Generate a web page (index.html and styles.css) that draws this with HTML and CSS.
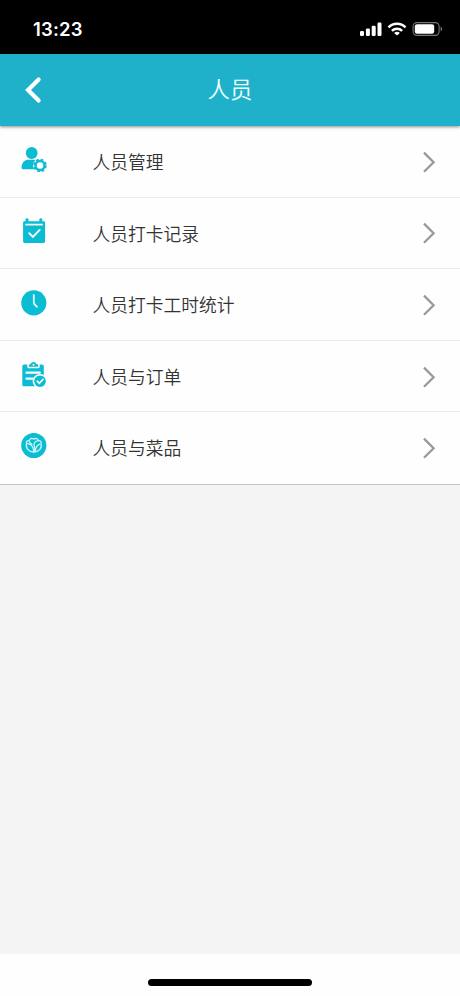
FILE: index.html
```html
<!DOCTYPE html>
<html lang="zh-CN">
<head>
<meta charset="utf-8">
<title>人员</title>
<link rel="stylesheet" href="styles.css">
</head>
<body>
<div class="screen">
  <div class="status">
    <span class="time">13:23</span>
    <div class="indicators">
      <svg class="signal" viewBox="0 0 22 14" fill="#fff"><rect x="0" y="9" width="4" height="5" rx="1.2"/><rect x="5.9" y="6.4" width="4" height="7.6" rx="1.2"/><rect x="11.7" y="3.8" width="4" height="10.2" rx="1.2"/><rect x="17.5" y="0.6" width="4" height="13.4" rx="1.2"/></svg>
      <svg class="wifi" viewBox="0 0 20 14" fill="none" stroke="#fff" stroke-width="2.5"><path d="M1.5 5.3C6.2.5 13.8.5 18.5 5.3M4.9 8.8c2.8-2.8 7.4-2.8 10.2 0"/><path d="M10 13.6 7.1 10.9c1.6-1.5 4.2-1.5 5.8 0z" fill="#fff" stroke="none"/></svg>
      <svg class="battery" viewBox="0 0 30 14"><rect x=".6" y=".6" width="26" height="12.8" rx="3.8" fill="none" stroke="#777" stroke-width="1.1"/><rect x="2.3" y="2.3" width="19.4" height="9.4" rx="2.2" fill="#fff"/><path d="M28.2 4.6c2 .9 2 3.9 0 4.8z" fill="#777"/></svg>
    </div>
  </div>
  <header class="header">
    <svg class="back" viewBox="0 0 18 28" fill="none" stroke="#fff" stroke-width="4.2" stroke-linecap="round" stroke-linejoin="miter"><path d="M14.6 3.4 4 14l10.6 10.6"/></svg>
    <h1 class="title">人员</h1>
  </header>
  <main class="content">
    <ul class="list">
      <li class="row">
        <svg class="icon" viewBox="0 0 26 26"><g fill="#0bbcd2"><circle cx="10.7" cy="6" r="5.9"/><path d="M6.2 12.7h8.9c-3.4 2.4-3.8 6.3-1.8 9.6H2.2C1 22.3.4 21.5.5 20.3c.3-3.8 2-6.8 5.7-7.6z"/></g><circle cx="19" cy="18.5" r="4.5" fill="none" stroke="#0bbcd2" stroke-width="2.5"/><circle cx="19" cy="18.5" r="6" fill="none" stroke="#0bbcd2" stroke-width="1.6" stroke-dasharray="2.7 2.012"/></svg>
        <span class="label">人员管理</span>
        <svg class="chevron" viewBox="0 0 14 22"><path d="m2 1.6 9.6 9.6L2 20.8"/></svg>
      </li>
      <li class="row">
        <svg class="icon" viewBox="0 0 26 26"><path fill="#0bbcd2" d="M6 .2c.9 0 1.5.6 1.5 1.4v1.7h10.8V1.6c0-.8.7-1.4 1.5-1.4s1.5.6 1.5 1.4v1.7h1.4c.9 0 1.4.6 1.4 1.4v18.6c0 1-.6 1.6-1.5 1.6H3.6c-.9 0-1.5-.6-1.5-1.6V4.7c0-.8.5-1.4 1.4-1.4h1V1.6C4.5.8 5.2.2 6 .2z"/><path d="M4.3 6.6h17.5" stroke="#fff" stroke-width="1.7"/><path d="m8.2 15.2 3.7 3.7 6.8-7" fill="none" stroke="#fff" stroke-width="1.9" stroke-linecap="round"/></svg>
        <span class="label">人员打卡记录</span>
        <svg class="chevron" viewBox="0 0 14 22"><path d="m2 1.6 9.6 9.6L2 20.8"/></svg>
      </li>
      <li class="row">
        <svg class="icon" viewBox="0 0 26 26"><circle cx="12.8" cy="12.8" r="12.6" fill="#0bbcd2"/><path d="M12.8 5v8.5l3.2 3.3" fill="none" stroke="#d6fbff" stroke-width="1.8" stroke-linecap="round" stroke-linejoin="round"/></svg>
        <span class="label">人员打卡工时统计</span>
        <svg class="chevron" viewBox="0 0 14 22"><path d="m2 1.6 9.6 9.6L2 20.8"/></svg>
      </li>
      <li class="row">
        <svg class="icon" viewBox="0 0 26 26"><path fill="#0bbcd2" d="M3.3 2.6h3v2.2c0 .9.5 1.4 1.3 1.4h9.8c.8 0 1.3-.5 1.3-1.4V2.6h2.2c1.2 0 1.9.7 1.9 1.9v19.8H3.3c-1.2 0-2-.7-2-1.9V4.5c0-1.2.8-1.9 2-1.9z"/><path fill="#0bbcd2" d="M7.8 4.7V3.5c0-.8.5-1.3 1.3-1.3h.5C10 .8 11 0 12.5 0s2.5.8 2.9 2.2h.5c.8 0 1.3.5 1.3 1.3v1.2z"/><circle cx="12.5" cy="2.7" r="1" fill="#fff"/><path d="M5.5 10.7h13.3M5.5 16.6h6.4" stroke="#fff" stroke-width="2.2" stroke-linecap="round"/><circle cx="19" cy="19.2" r="7.3" fill="#fefefe"/><circle cx="19" cy="19.2" r="5.8" fill="#0bbcd2"/><path d="m16.2 19.2 2.2 2.1 3.7-4" fill="none" stroke="#fff" stroke-width="1.6" stroke-linecap="round"/></svg>
        <span class="label">人员与订单</span>
        <svg class="chevron" viewBox="0 0 14 22"><path d="m2 1.6 9.6 9.6L2 20.8"/></svg>
      </li>
      <li class="row">
        <svg class="icon" viewBox="0 0 26 26"><circle cx="12.8" cy="12.5" r="12.6" fill="#0bbcd2"/><g fill="none" stroke="#c3f8fc" stroke-width="1.3" stroke-linecap="round" stroke-linejoin="round"><path d="M8.2 7.7c-2.3-.3-3.2 1.3-2.6 2.7-1.4 4.4 2 8.5 7.2 8.7 5.2-.2 8.7-4.3 7.2-8.7.6-1.4-.3-3-2.6-2.7-.5-2.2-2.8-3-4.6-1.5-1.8-1.5-4.1-.7-4.6 1.5z"/><path d="M8.2 7.7c.2 1.9 1 2.6 2.6 3.4M17.4 7.7c-3.7.4-5.2 3.1-4 6 .8 2 .5 3.8-.6 5.4M6.6 10.7c3.9.5 5.9 3.5 6.2 8.4M19 11.1c-2.9.9-4.4 3.3-4.6 6.8"/></g></svg>
        <span class="label">人员与菜品</span>
        <svg class="chevron" viewBox="0 0 14 22"><path d="m2 1.6 9.6 9.6L2 20.8"/></svg>
      </li>
    </ul>
  </main>
  <footer class="home"><div class="home-bar"></div></footer>
</div>
</body>
</html>
```
FILE: styles.css
```css
* { box-sizing: border-box; }
body {
  margin: 0;
  font-family: "Noto Sans CJK SC", sans-serif;
}
svg { display: block; flex: none; }
.screen {
  width: 460px;
  height: 996px;
  display: flex;
  flex-direction: column;
  overflow: hidden;
  background: #f4f4f4;
}
.status {
  flex: none;
  height: 54px;
  padding: 3px 17px 0 33px;
  display: flex;
  align-items: center;
  justify-content: space-between;
  background: #000;
  color: #fff;
}
.time {
  font: 600 18.5px/24px Inter, sans-serif;
  letter-spacing: 0.2px;
}
.indicators { display: flex; align-items: center; gap: 5px; }
.signal { width: 22px; height: 14px; }
.wifi { width: 20px; height: 14px; }
.battery { width: 31px; height: 14px; }
.header {
  flex: none;
  height: 72px;
  padding: 0 24px;
  display: grid;
  grid-template-columns: 18px 1fr 18px;
  align-items: center;
  background: #1eb1c9;
  box-shadow: 0 1px 3px rgba(0, 0, 0, 0.45);
  z-index: 1;
}
.back { width: 18px; height: 28px; }
.title {
  margin: 0;
  padding-bottom: 4px;
  color: #f2ffff;
  font-size: 22.4px;
  font-weight: 350;
  line-height: 32px;
  text-align: center;
}
.content { flex: 1; }
.list {
  margin: 0;
  padding: 0;
  list-style: none;
  background: #fefefe;
  border-bottom: 1px solid #c4c4c4;
}
.row {
  height: 71.6px;
  padding: 1px 24px 0 20.5px;
  display: flex;
  align-items: center;
  border-bottom: 1px solid #ebebeb;
}
.row:last-child { border-bottom: 0; padding-top: 0; }
.icon { width: 26px; height: 26px; margin-bottom: 4px; }
.label {
  flex: 1;
  margin-left: 46px;
  padding-bottom: 1.4px;
  color: #333;
  font-size: 17.75px;
  font-weight: 350;
  line-height: 26px;
}
.chevron {
  width: 14px;
  height: 22px;
  fill: none;
  stroke: #999;
  stroke-width: 2.3;
}
.home {
  flex: none;
  height: 42px;
  padding-top: 25px;
  display: flex;
  justify-content: center;
  background: #fefefe;
}
.home-bar {
  width: 164px;
  height: 7px;
  border-radius: 4px;
  background: #000;
}
```
